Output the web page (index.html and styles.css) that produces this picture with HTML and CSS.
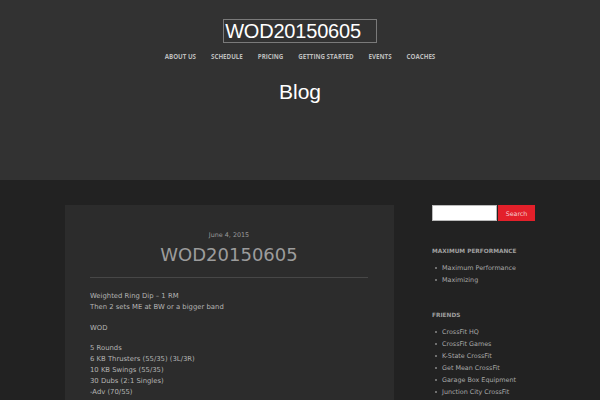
FILE: index.html
```html
<!DOCTYPE html>
<html>
<head>
<meta charset="utf-8">
<link rel="stylesheet" href="styles.css">
</head>
<body>
<header class="site-header">
  <div class="branding"><span class="logo">WOD20150605</span></div>
  <nav class="menu">
    <a>ABOUT US</a><a>SCHEDULE</a><a>PRICING</a><a>GETTING STARTED</a><a>EVENTS</a><a>COACHES</a>
  </nav>
  <h1 class="page-title">Blog</h1>
</header>
<div class="main">
  <article class="post">
    <div class="date">June 4, 2015</div>
    <h2 class="post-title">WOD20150605</h2>
    <hr class="sep">
    <div class="entry">
      <p>Weighted Ring Dip – 1 RM<br>Then 2 sets ME at BW or a bigger band</p>
      <p>WOD</p>
      <p>5 Rounds<br>6 KB Thrusters (55/35) (3L/3R)<br>10 KB Swings (55/35)<br>30 Dubs (2:1 Singles)<br>-Adv (70/55)</p>
    </div>
  </article>
  <aside class="sidebar">
    <form class="search"><input class="search-input" type="text"><button class="search-btn" type="button">Search</button></form>
    <h3 class="widget-title first">MAXIMUM PERFORMANCE</h3>
    <ul class="links">
      <li>Maximum Performance</li>
      <li>Maximizing</li>
    </ul>
    <h3 class="widget-title">FRIENDS</h3>
    <ul class="links">
      <li>CrossFit HQ</li>
      <li>CrossFit Games</li>
      <li>K-State CrossFit</li>
      <li>Get Mean CrossFit</li>
      <li>Garage Box Equipment</li>
      <li>Junction City CrossFit</li>
    </ul>
  </aside>
</div>
</body>
</html>
```
FILE: styles.css
```css
html, body { margin: 0; padding: 0; }
body {
  background: #222222;
  font-family: "DejaVu Sans", sans-serif;
  width: 600px;
  height: 400px;
  overflow: hidden;
}
.site-header {
  background: #323232;
  height: 180px;
  padding-top: 19px;
  box-sizing: border-box;
  text-align: center;
}
.branding { height: 24px; }
.logo {
  display: inline-block;
  box-sizing: border-box;
  height: 24px;
  border: 1px solid #7a7a7a;
  padding: 0 15px 0 1px;
  font-family: "Liberation Sans", Arial, sans-serif;
  font-size: 20px;
  line-height: 22px;
  color: #ffffff;
  letter-spacing: -0.2px;
}
.menu {
  margin-top: 9px;
  display: flex;
  justify-content: center;
  gap: 15px;
  line-height: 10px;
}
.menu a {
  font-family: "Open Sans", sans-serif;
  font-weight: 700;
  font-size: 6.2px;
  color: #bdbdbd;
}
.page-title {
  margin: 17px 0 0;
  font-family: "Liberation Sans", Arial, sans-serif;
  font-weight: 400;
  font-size: 21px;
  line-height: 26px;
  color: #ffffff;
}
.main {
  width: 470px;
  margin: 0 auto;
  padding-top: 25px;
  display: flex;
  gap: 38px;
  align-items: flex-start;
}
.post {
  width: 329px;
  box-sizing: border-box;
  background: #2c2c2c;
  padding: 25px 26px 20px 25px;
  height: 195px;
}
.date {
  text-align: center;
  font-size: 6.4px;
  line-height: 10px;
  color: #9a9a9a;
}
.post-title {
  margin: 4px 0 0;
  text-align: center;
  font-weight: 400;
  font-size: 18px;
  line-height: 22px;
  color: #9c9c9c;
}
.sep {
  margin: 11px 0 0;
  border: 0;
  height: 1px;
  background: #474747;
}
.entry { margin-top: 13px; }
.entry p {
  margin: 0 0 10px;
  font-size: 6.85px;
  line-height: 10.8px;
  color: #b4b4b4;
}
.sidebar { width: 103px; }
.search { display: flex; height: 16px; margin: 0; }
.search-input {
  width: 65px;
  height: 16px;
  box-sizing: border-box;
  border: 1px solid #bbbbbb;
  background: #ffffff;
  margin: 0;
  padding: 0;
}
.search-btn {
  width: 38px;
  height: 16px;
  margin: 0 0 0 1px;
  padding: 0;
  border: 0;
  background: #e3202a;
  color: #f4d0d2;
  font-family: "DejaVu Sans", sans-serif;
  font-size: 6.3px;
}
.widget-title {
  margin: 24px 0 0;
  font-family: "DejaVu Sans", sans-serif;
  font-weight: 700;
  font-size: 5.8px;
  line-height: 10px;
  color: #a0a0a0;
}
.widget-title.first { margin-top: 25px; }
.links {
  list-style: none;
  margin: 6px 0 0;
  padding: 0;
}
.links li {
  position: relative;
  padding-left: 10px;
  font-size: 6.4px;
  line-height: 12px;
  color: #a8a8a8;
}
.links li::before {
  content: "";
  position: absolute;
  left: 3px;
  top: 5px;
  width: 2px;
  height: 2px;
  border-radius: 50%;
  background: #8a8a8a;
}
```
